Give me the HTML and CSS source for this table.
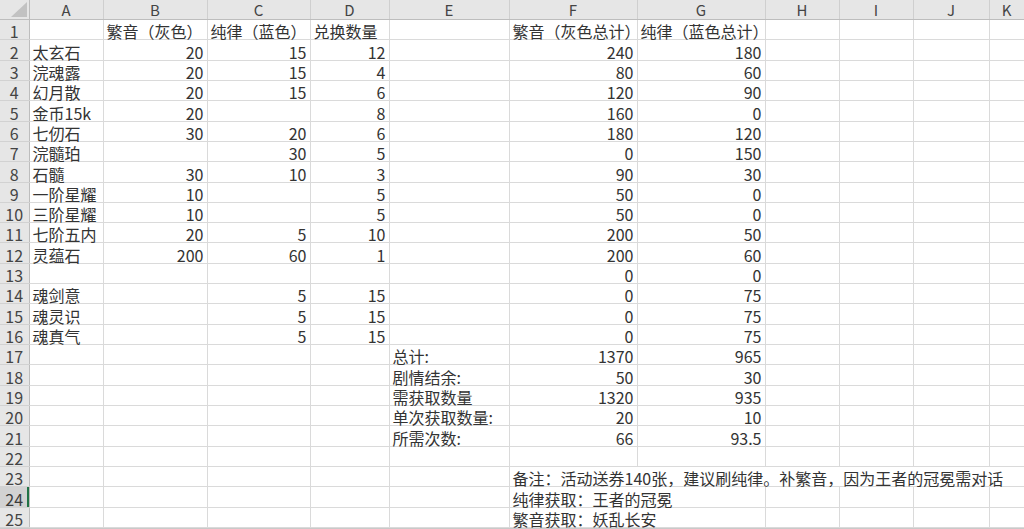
FILE: index.html
```html
<!DOCTYPE html>
<html lang="zh-CN">
<head>
<meta charset="utf-8">
<title>Sheet</title>
<link rel="stylesheet" href="styles.css">
</head>
<body>
<div class="app">
<table class="sheet">
<colgroup>
<col class="w-rh"><col class="w-a"><col class="w-b"><col class="w-c"><col class="w-d"><col class="w-e"><col class="w-f"><col class="w-g"><col class="w-h"><col class="w-i"><col class="w-j"><col class="w-k">
</colgroup>
<thead>
<tr class="colhead">
<th class="corner"><span class="tri"></span></th><th>A</th><th>B</th><th>C</th><th>D</th><th>E</th><th>F</th><th>G</th><th>H</th><th>I</th><th>J</th><th>K</th>
</tr>
</thead>
<tbody>
<tr><th class="rh">1</th><td></td><td>繁音（灰色）</td><td>纯律（蓝色）</td><td>兑换数量</td><td></td><td>繁音（灰色总计）</td><td>纯律（蓝色总计）</td><td></td><td></td><td></td><td></td></tr>
<tr><th class="rh">2</th><td>太玄石</td><td class="n">20</td><td class="n">15</td><td class="n">12</td><td></td><td class="n">240</td><td class="n">180</td><td></td><td></td><td></td><td></td></tr>
<tr><th class="rh">3</th><td>浣魂露</td><td class="n">20</td><td class="n">15</td><td class="n">4</td><td></td><td class="n">80</td><td class="n">60</td><td></td><td></td><td></td><td></td></tr>
<tr><th class="rh">4</th><td>幻月散</td><td class="n">20</td><td class="n">15</td><td class="n">6</td><td></td><td class="n">120</td><td class="n">90</td><td></td><td></td><td></td><td></td></tr>
<tr><th class="rh">5</th><td>金币15k</td><td class="n">20</td><td></td><td class="n">8</td><td></td><td class="n">160</td><td class="n">0</td><td></td><td></td><td></td><td></td></tr>
<tr><th class="rh">6</th><td>七仞石</td><td class="n">30</td><td class="n">20</td><td class="n">6</td><td></td><td class="n">180</td><td class="n">120</td><td></td><td></td><td></td><td></td></tr>
<tr><th class="rh">7</th><td>浣髓珀</td><td></td><td class="n">30</td><td class="n">5</td><td></td><td class="n">0</td><td class="n">150</td><td></td><td></td><td></td><td></td></tr>
<tr><th class="rh">8</th><td>石髓</td><td class="n">30</td><td class="n">10</td><td class="n">3</td><td></td><td class="n">90</td><td class="n">30</td><td></td><td></td><td></td><td></td></tr>
<tr><th class="rh">9</th><td>一阶星耀</td><td class="n">10</td><td></td><td class="n">5</td><td></td><td class="n">50</td><td class="n">0</td><td></td><td></td><td></td><td></td></tr>
<tr><th class="rh">10</th><td>三阶星耀</td><td class="n">10</td><td></td><td class="n">5</td><td></td><td class="n">50</td><td class="n">0</td><td></td><td></td><td></td><td></td></tr>
<tr><th class="rh">11</th><td>七阶五内</td><td class="n">20</td><td class="n">5</td><td class="n">10</td><td></td><td class="n">200</td><td class="n">50</td><td></td><td></td><td></td><td></td></tr>
<tr><th class="rh">12</th><td>灵蕴石</td><td class="n">200</td><td class="n">60</td><td class="n">1</td><td></td><td class="n">200</td><td class="n">60</td><td></td><td></td><td></td><td></td></tr>
<tr><th class="rh">13</th><td></td><td></td><td></td><td></td><td></td><td class="n">0</td><td class="n">0</td><td></td><td></td><td></td><td></td></tr>
<tr><th class="rh">14</th><td>魂剑意</td><td></td><td class="n">5</td><td class="n">15</td><td></td><td class="n">0</td><td class="n">75</td><td></td><td></td><td></td><td></td></tr>
<tr><th class="rh">15</th><td>魂灵识</td><td></td><td class="n">5</td><td class="n">15</td><td></td><td class="n">0</td><td class="n">75</td><td></td><td></td><td></td><td></td></tr>
<tr><th class="rh">16</th><td>魂真气</td><td></td><td class="n">5</td><td class="n">15</td><td></td><td class="n">0</td><td class="n">75</td><td></td><td></td><td></td><td></td></tr>
<tr><th class="rh">17</th><td></td><td></td><td></td><td></td><td>总计:</td><td class="n">1370</td><td class="n">965</td><td></td><td></td><td></td><td></td></tr>
<tr><th class="rh">18</th><td></td><td></td><td></td><td></td><td>剧情结余:</td><td class="n">50</td><td class="n">30</td><td></td><td></td><td></td><td></td></tr>
<tr><th class="rh">19</th><td></td><td></td><td></td><td></td><td>需获取数量</td><td class="n">1320</td><td class="n">935</td><td></td><td></td><td></td><td></td></tr>
<tr><th class="rh">20</th><td></td><td></td><td></td><td></td><td>单次获取数量:</td><td class="n">20</td><td class="n">10</td><td></td><td></td><td></td><td></td></tr>
<tr><th class="rh">21</th><td></td><td></td><td></td><td></td><td>所需次数:</td><td class="n">66</td><td class="n">93.5</td><td></td><td></td><td></td><td></td></tr>
<tr><th class="rh">22</th><td></td><td></td><td></td><td></td><td></td><td></td><td></td><td></td><td></td><td></td><td></td></tr>
<tr><th class="rh">23</th><td></td><td></td><td></td><td></td><td></td><td colspan="6">备注：活动送券140张，建议刷纯律。补繁音，因为王者的冠冕需对话</td></tr>
<tr><th class="rh sel">24</th><td></td><td></td><td></td><td></td><td></td><td colspan="2">纯律获取：王者的冠冕</td><td></td><td></td><td></td><td></td></tr>
<tr><th class="rh">25</th><td></td><td></td><td></td><td></td><td></td><td colspan="2">繁音获取：妖乱长安</td><td></td><td></td><td></td><td></td></tr>
</tbody>
</table>
<div class="tabbar"><span class="tab"></span></div>
</div>
</body>
</html>
```
FILE: styles.css
```css
html, body {
  margin: 0;
  padding: 0;
  background: #ffffff;
  overflow: hidden;
}

.app {
  width: 1024px;
  height: 529px;
  display: flex;
  flex-direction: column;
  overflow: hidden;
}

.sheet {
  border-collapse: collapse;
  table-layout: fixed;
  width: 1024px;
  font-family: "Noto Sans CJK SC", sans-serif;
  font-size: 16px;
  color: #333333;
  flex: none;
}

.w-rh { width: 29px; }
.w-a { width: 74px; }
.w-b { width: 104px; }
.w-c { width: 103px; }
.w-d { width: 79px; }
.w-e { width: 120px; }
.w-f { width: 128px; }
.w-g { width: 128px; }
.w-h { width: 74px; }
.w-i { width: 74px; }
.w-j { width: 76px; }
.w-k { width: 35px; }

.colhead th {
  height: 19px;
  padding: 0;
  background: #e6e6e6;
  border-right: 1px solid #cfcfcf;
  border-bottom: 1px solid #bdbdbd;
  font-weight: normal;
  font-size: 15px;
  line-height: 18px;
  color: #444444;
  text-align: center;
  vertical-align: middle;
}

.colhead th.corner {
  position: relative;
  border-right: 1px solid #bdbdbd;
}

.tri {
  position: absolute;
  right: 2px;
  bottom: 2px;
  width: 0;
  height: 0;
  border-left: 16px solid transparent;
  border-bottom: 15px solid #c2c2c2;
}

tbody tr {
  height: 20.32px;
}

tbody td {
  padding: 0 3px;
  border-right: 1px solid #dadada;
  border-bottom: 1px solid #dadada;
  white-space: nowrap;
  line-height: 15px;
  vertical-align: bottom;
}

tbody td.n {
  text-align: right;
  padding-right: 3px;
}

th.rh {
  padding: 0;
  background: #e6e6e6;
  border-right: 1px solid #bdbdbd;
  border-bottom: 1px solid #d2d2d2;
  font-weight: normal;
  font-size: 16px;
  line-height: 15px;
  color: #444444;
  text-align: center;
  vertical-align: bottom;
}

th.rh.sel {
  background: #d2d2d2;
  color: #3b3b3b;
  box-shadow: inset -2px 0 0 #217346;
}

.tabbar {
  flex: 1;
  background: #c9c9c9;
  position: relative;
}

.tab {
  position: absolute;
  left: 77px;
  top: 1px;
  width: 61px;
  bottom: 0;
  background: #ffffff;
}
```
